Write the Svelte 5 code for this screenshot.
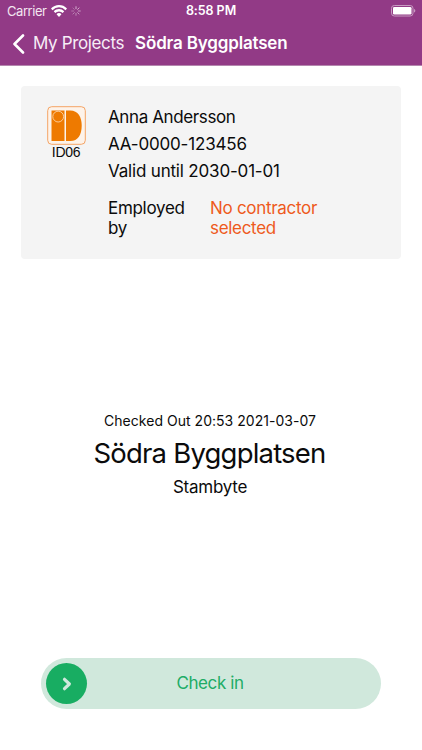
<script lang="ts">
  const worker = {
    name: "Anna Andersson",
    cardNumber: "AA-0000-123456",
    validUntil: "2030-01-01",
  };
  const project = {
    name: "Södra Byggplatsen",
    description: "Stambyte",
    status: "Checked Out 20:53 2021-03-07",
  };

  // one spoke per 45°, fading around the circle
  const spokes = Array.from({ length: 8 }, (_, i) => ({
    angle: i * 45,
    opacity: 0.85 - i * 0.07,
  }));
</script>

<div class="screen">
  <header>
    <div class="statusbar">
      <div class="carrier">
        <span>Carrier</span>
        <svg class="wifi" width="16" height="12" viewBox="0 0 15 10.5" preserveAspectRatio="none">
          <path d="M7.5 0C4.6 0 2 1.1 0 3l1.4 1.5a8.8 8.8 0 0 1 12.2 0L15 3a10.9 10.9 0 0 0-7.5-3z" />
          <path d="M7.5 3.6c-1.9 0-3.6.7-4.9 1.9L4 7a5.1 5.1 0 0 1 7 0l1.4-1.5a7.2 7.2 0 0 0-4.9-1.9z" />
          <path d="M7.5 7.1c-.9 0-1.7.3-2.3.9l2.3 2.5L9.8 8c-.6-.6-1.4-.9-2.3-.9z" />
        </svg>
        <svg class="spinner" width="10" height="10" viewBox="-5 -5 10 10">
          {#each spokes as spoke (spoke.angle)}
            <path d="M0-2.3V-4.3" transform="rotate({spoke.angle})" opacity={spoke.opacity} />
          {/each}
        </svg>
      </div>
      <span class="clock">8:58 PM</span>
      <svg class="battery" width="25" height="12" viewBox="0 0 25 12">
        <rect class="shell" x="0.5" y="0.5" width="21.5" height="10.5" rx="2.8" />
        <rect x="2" y="2" width="18.5" height="7.5" rx="1.3" />
        <path class="cap" d="M23 4v3.6c.9-.3 1.3-1 1.3-1.8S23.9 4.3 23 4z" />
      </svg>
    </div>
    <nav>
      <button class="back">
        <svg width="13" height="20" viewBox="0 0 13 20">
          <path d="M11 1.500 2.500 10l8.500 8.500" />
        </svg>
        <span>My Projects</span>
      </button>
      <h1>{project.name}</h1>
    </nav>
  </header>

  <section class="card">
    <div class="logo">
      <svg width="39" height="39" viewBox="0 0 39 39">
        <rect class="frame" x="0.7" y="0.7" width="37.6" height="37.6" rx="4" />
        <path d="M4.5 4.5h13V35h-13z" />
        <path d="M19 4.5h4.3C31 4.5 34.7 11 34.7 19.7S31 35 23.3 35H19z" />
        <circle cx="11.2" cy="10.6" r="5.4" />
      </svg>
      <span>ID06</span>
    </div>
    <div class="details">
      <p class="name">{worker.name}</p>
      <p>{worker.cardNumber}</p>
      <p>Valid until {worker.validUntil}</p>
      <div class="employer">
        <span class="label">Employed by</span>
        <span class="missing">No contractor selected</span>
      </div>
    </div>
  </section>

  <main>
    <p class="status">{project.status}</p>
    <h2>{project.name}</h2>
    <p class="description">{project.description}</p>
  </main>

  <div class="slider">
    <button class="thumb" aria-label="Slide to check in">
      <svg width="12" height="16" viewBox="0 0 12 16">
        <path d="m3.500 3.300 4.900 4.700-4.900 4.700" />
      </svg>
    </button>
    <span class="action">Check in</span>
  </div>
</div>

<style>
  :global(body) {
    margin: 0;
    background: #fff;
  }
  .screen {
    box-sizing: border-box;
    display: flex;
    flex-direction: column;
    width: 422px;
    height: 750px;
    overflow: hidden;
    background: #fff;
    color: #0b0b0b;
    font-family: Inter, "Liberation Sans", sans-serif;
    font-size: 17px;
  }
  p,
  h1,
  h2 {
    margin: 0;
    font-weight: 400;
  }
  button {
    padding: 0;
    border: 0;
    font: inherit;
    color: inherit;
  }
  header {
    box-sizing: border-box;
    height: 66px;
    background: #923a86;
    border-bottom: 1px solid #b487ae;
    color: #fff;
  }
  .statusbar {
    display: grid;
    grid-template-columns: 1fr auto 1fr;
    align-items: center;
    height: 22px;
    padding: 0 7px;
    font-size: 13px;
    line-height: 22px;
  }
  .carrier {
    display: flex;
    align-items: center;
    color: #f3e6f1;
    letter-spacing: -0.45px;
  }
  .wifi {
    margin-left: 5px;
    fill: #fff;
  }
  .spinner {
    margin-left: 4px;
    fill: none;
    stroke: #e9d3e6;
    stroke-width: 0.9;
    stroke-linecap: round;
  }
  .clock {
    font-size: 12.5px;
    font-weight: 600;
    letter-spacing: -0.05px;
  }
  .battery {
    justify-self: end;
    margin-right: -1px;
    fill: #fff;
  }
  .battery .shell {
    fill: none;
    stroke: #c79bc1;
  }
  .battery .cap {
    fill: #c79bc1;
  }
  nav {
    display: flex;
    align-items: center;
    height: 43px;
    padding-left: 12px;
    line-height: 43px;
  }
  .back {
    display: flex;
    align-items: center;
    gap: 8px;
    background: none;
    color: #f7edf6;
    letter-spacing: -0.36px;
  }
  .back svg {
    fill: none;
    stroke: #fff;
    stroke-width: 2.6;
    stroke-linecap: round;
    stroke-linejoin: round;
  }
  h1 {
    margin-left: 11px;
    font-size: 17px;
    font-weight: 600;
    letter-spacing: -0.17px;
  }
  .card {
    box-sizing: border-box;
    display: flex;
    height: 173px;
    margin: 20px 21px 0;
    padding: 18px 26px 0;
    border-radius: 4px;
    background: #f4f4f4;
  }
  .logo {
    display: flex;
    flex-direction: column;
    align-items: center;
    width: 39px;
    padding-top: 2px;
    font-family: "Liberation Sans", Arial, sans-serif;
    font-size: 14px;
    line-height: 14px;
    letter-spacing: -0.3px;
  }
  .logo span {
    padding-right: 1px;
  }
  .logo svg {
    fill: #ee7a00;
  }
  .logo .frame {
    fill: #fdf3ea;
    stroke: #f4a465;
    stroke-width: 1;
  }
  .logo circle {
    fill: none;
    stroke: #fbd3a8;
    stroke-width: 0.9;
  }
  .details {
    margin-left: 22px;
    line-height: 27px;
    letter-spacing: -0.18px;
  }
  .name {
    letter-spacing: -0.38px;
  }
  .employer {
    display: flex;
    margin-top: 13px;
    line-height: 20px;
    letter-spacing: -0.3px;
  }
  .label {
    width: 102px;
    box-sizing: border-box;
    padding-right: 20px;
  }
  .missing {
    width: 120px;
    color: #ee5a1c;
  }
  main {
    display: flex;
    flex: 1;
    flex-direction: column;
    align-items: center;
    padding: 152px 2px 0 0;
  }
  .status {
    font-size: 14px;
    line-height: 20px;
    letter-spacing: 0.03px;
  }
  h2 {
    font-size: 27.5px;
    line-height: 45px;
    letter-spacing: -0.8px;
    padding-right: 1px;
  }
  .description {
    line-height: 22px;
    letter-spacing: -0.25px;
  }
  .slider {
    box-sizing: border-box;
    display: grid;
    grid-template-columns: 41px 1fr 41px;
    align-items: center;
    height: 51px;
    margin: 0 41px 41px;
    padding: 0 5px;
    border-radius: 26px;
    background: #d0e8dc;
    color: #20ac66;
    text-align: center;
  }
  .action {
    padding: 0 2px 2px 0;
    letter-spacing: -0.4px;
  }
  .thumb {
    display: flex;
    align-items: center;
    justify-content: center;
    width: 41px;
    height: 41px;
    border-radius: 50%;
    background: #18ad62;
  }
  .thumb svg {
    fill: none;
    stroke: #d0e8dc;
    stroke-width: 3.2;
    stroke-linecap: round;
    stroke-linejoin: round;
  }
</style>
